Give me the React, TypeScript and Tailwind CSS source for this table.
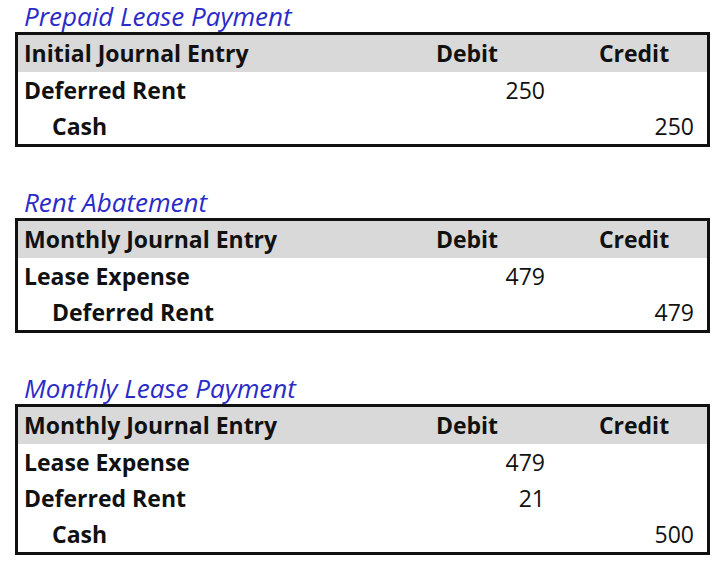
import React from 'react';

type Row = { label: string; debit?: string; credit?: string; indent?: boolean };

type Entry = { title: string; heading: string; rows: Row[] };

const entries: Entry[] = [
  {
    title: 'Prepaid Lease Payment',
    heading: 'Initial Journal Entry',
    rows: [
      { label: 'Deferred Rent', debit: '250' },
      { label: 'Cash', credit: '250', indent: true },
    ],
  },
  {
    title: 'Rent Abatement',
    heading: 'Monthly Journal Entry',
    rows: [
      { label: 'Lease Expense', debit: '479' },
      { label: 'Deferred Rent', credit: '479', indent: true },
    ],
  },
  {
    title: 'Monthly Lease Payment',
    heading: 'Monthly Journal Entry',
    rows: [
      { label: 'Lease Expense', debit: '479' },
      { label: 'Deferred Rent', debit: '21' },
      { label: 'Cash', credit: '500', indent: true },
    ],
  },
];

const JournalTable = ({ entry }: { entry: Entry }) => (
  <div>
    <div className="h-[32px] pl-[9px] pt-[1px] text-[26px] leading-[30px] italic text-[#2b2bc8]">
      {entry.title}
    </div>
    <div className="border-[3px] border-[#111]">
      <div className="flex h-[37px] items-center bg-[#d9d9d9] font-bold">
        <div className="flex-1 pl-[6px]">{entry.heading}</div>
        <div className="w-[158px] pr-[4px] text-center">Debit</div>
        <div className="w-[159px] pl-[13px] text-center">Credit</div>
      </div>
      {entry.rows.map((row, i) => (
        <div key={i} className="flex h-[36px] items-center">
          <div className={`flex-1 font-bold ${row.indent ? 'pl-[34px]' : 'pl-[6px]'}`}>{row.label}</div>
          <div className="w-[158px] pr-[3px] text-right">{row.debit}</div>
          <div className="w-[159px] pr-[13px] text-right">{row.credit}</div>
        </div>
      ))}
    </div>
  </div>
);

export default function App() {
  return (
    <div className="h-[562px] w-[720px] bg-white pl-[15px] pr-[10px] text-[23px] leading-none text-[#111] [font-family:'Open_Sans',Lato,sans-serif]">
      <div className="flex flex-col gap-[39px]">
        {entries.map((e, i) => (
          <JournalTable key={i} entry={e} />
        ))}
      </div>
    </div>
  );
}
